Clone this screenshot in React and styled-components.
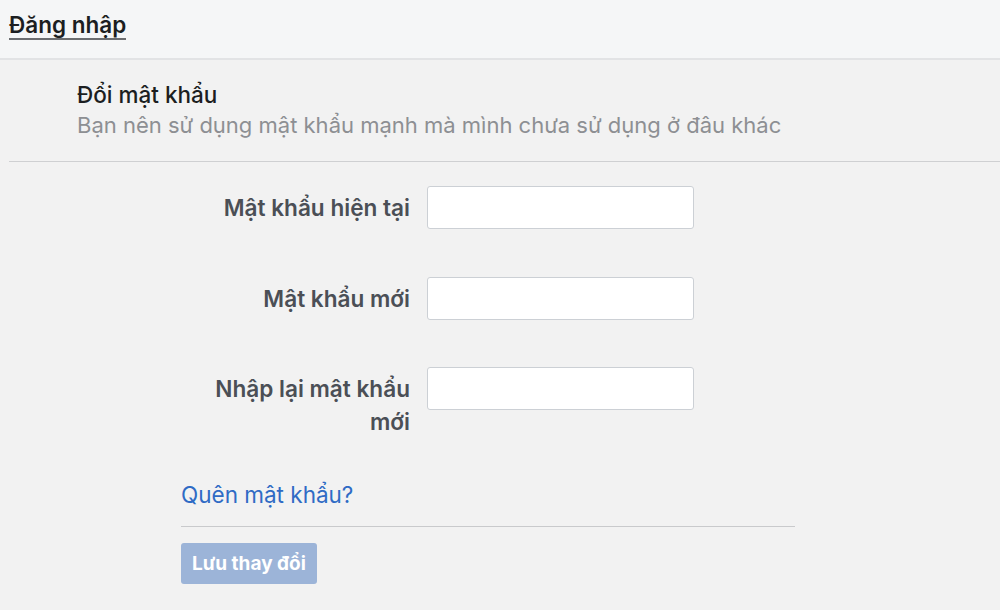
import React from 'react';
import styled, { createGlobalStyle } from 'styled-components';

const GlobalStyle = createGlobalStyle`
    html, body {
        margin: 0;
        padding: 0;
        background: #f2f2f2;
        font-family: Inter, "Noto Sans", sans-serif;
    }
`;

const fields = [
    { id: 'current', label: 'Mật khẩu hiện tại' },
    { id: 'new', label: 'Mật khẩu mới' },
    { id: 'confirm', label: 'Nhập lại mật khẩu mới' }
];

class App extends React.Component {
    render() {
        return (
            <Page>
                <GlobalStyle />
                <TopBar>
                    <TopLink href="#">Đăng nhập</TopLink>
                </TopBar>
                <Intro>
                    <Title>Đổi mật khẩu</Title>
                    <Subtitle>Bạn nên sử dụng mật khẩu mạnh mà mình chưa sử dụng ở đâu khác</Subtitle>
                </Intro>
                <Form>
                    {fields.map(f => (
                        <Row key={f.id}>
                            <Label htmlFor={f.id}>{f.label}</Label>
                            <Input id={f.id} type="password" />
                        </Row>
                    ))}
                    <Forgot href="#">Quên mật khẩu?</Forgot>
                    <Footer>
                        <SaveButton type="button" disabled>Lưu thay đổi</SaveButton>
                    </Footer>
                </Form>
            </Page>
        )
    }
}

// Styled Components
const Page = styled.div`
    min-height: 610px;
    background: #f2f2f2;
`;

const TopBar = styled.div`
    height: 60px;
    box-sizing: border-box;
    background: #f5f6f7;
    border-bottom: 2px solid #e2e3e5;
    display: flex;
    align-items: center;
    padding: 0 9px;
`;

const TopLink = styled.a`
    font-size: 22.5px;
    font-weight: 600;
    color: #1c1e21;
    text-decoration: none;
    border-bottom: 2px solid #6b6d70;
    line-height: 26px;
    margin-top: -6px;
`;

const Intro = styled.div`
    margin-left: 9px;
    padding: 20px 0 21px 68px;
    border-bottom: 1px solid #cfd0d2;
`;

const Title = styled.div`
    font-size: 22.5px;
    font-weight: 500;
    color: #1c1e21;
    line-height: 30px;
`;

const Subtitle = styled.div`
    font-size: 22px;
    color: #8d8f93;
    line-height: 30px;
`;

const Form = styled.div`
    width: 614px;
    margin-left: 181px;
    padding-top: 24px;
`;

const Row = styled.div`
    display: grid;
    grid-template-columns: 229px 267px;
    column-gap: 17px;
    align-items: start;
    margin-bottom: 47.5px;
`;

const Label = styled.label`
    justify-self: end;
    max-width: 215px;
    text-align: right;
    font-size: 22.6px;
    font-weight: 600;
    color: #4b4f56;
    line-height: 33px;
    padding-top: 5px;
`;

const Input = styled.input`
    width: 267px;
    height: 43px;
    box-sizing: border-box;
    background: #fff;
    border: 1px solid #ccd0d5;
    border-radius: 3px;
    outline: none;
`;

const Forgot = styled.a`
    display: block;
    font-size: 22.5px;
    color: #2f6bc5;
    text-decoration: none;
    line-height: 28px;
    margin-top: -5px;
    padding-bottom: 17px;
    border-bottom: 1px solid #c9cacc;
`;

const Footer = styled.div`
    padding-top: 16px;
`;

const SaveButton = styled.button`
    height: 41px;
    padding: 0 11px;
    background: #9cb4d8;
    border: none;
    border-radius: 3px;
    color: #fff;
    font-family: Inter, "Noto Sans", sans-serif;
    font-size: 19px;
    font-weight: 700;
`;

export default App;
